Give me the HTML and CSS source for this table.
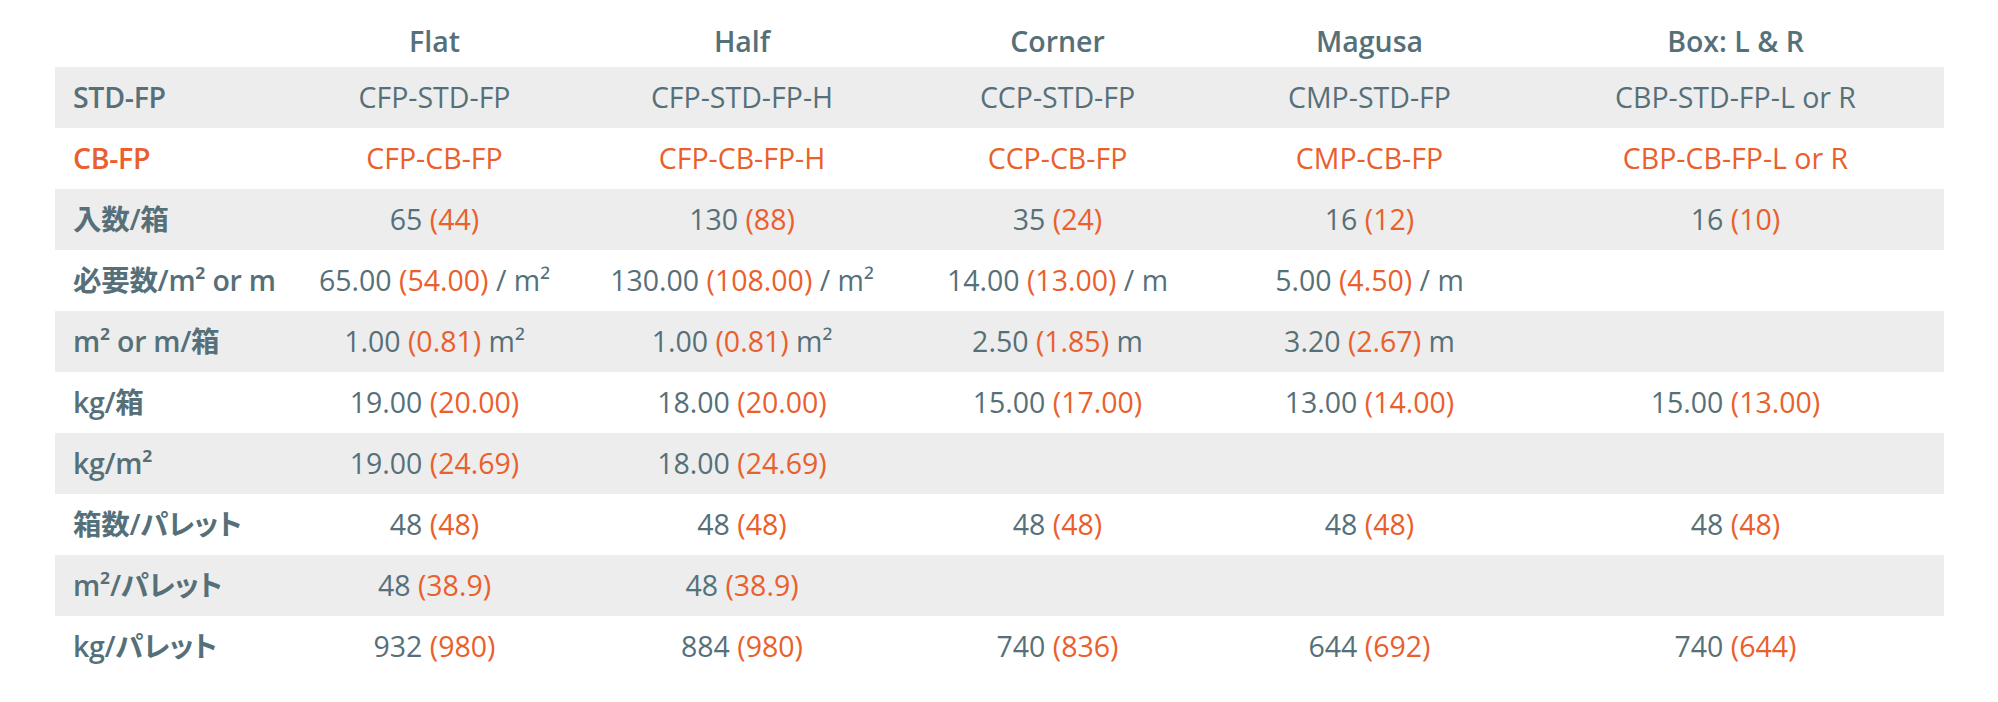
FILE: index.html
```html
<!DOCTYPE html>
<html lang="ja">
<head>
<meta charset="utf-8">
<title>Spec table</title>
<link rel="stylesheet" href="styles.css">
</head>
<body>
<div class="wrap">
<table class="spec">
  <colgroup>
    <col class="c-label">
    <col class="c-flat">
    <col class="c-half">
    <col class="c-corner">
    <col class="c-magusa">
    <col class="c-box">
  </colgroup>
  <thead>
    <tr>
      <th></th>
      <th class="head">Flat</th>
      <th class="head">Half</th>
      <th class="head">Corner</th>
      <th class="head">Magusa</th>
      <th class="head">Box: L &amp; R</th>
    </tr>
  </thead>
  <tbody>
    <tr class="band">
      <th class="label">STD-FP</th>
      <td>CFP-STD-FP</td>
      <td>CFP-STD-FP-H</td>
      <td>CCP-STD-FP</td>
      <td>CMP-STD-FP</td>
      <td>CBP-STD-FP-L or R</td>
    </tr>
    <tr class="cb">
      <th class="label">CB-FP</th>
      <td>CFP-CB-FP</td>
      <td>CFP-CB-FP-H</td>
      <td>CCP-CB-FP</td>
      <td>CMP-CB-FP</td>
      <td>CBP-CB-FP-L or R</td>
    </tr>
    <tr class="band">
      <th class="label">入数/箱</th>
      <td>65 <span class="alt">(44)</span></td>
      <td>130 <span class="alt">(88)</span></td>
      <td>35 <span class="alt">(24)</span></td>
      <td>16 <span class="alt">(12)</span></td>
      <td>16 <span class="alt">(10)</span></td>
    </tr>
    <tr>
      <th class="label">必要数/m² or m</th>
      <td>65.00 <span class="alt">(54.00)</span> / m²</td>
      <td>130.00 <span class="alt">(108.00)</span> / m²</td>
      <td>14.00 <span class="alt">(13.00)</span> / m</td>
      <td>5.00 <span class="alt">(4.50)</span> / m</td>
      <td></td>
    </tr>
    <tr class="band">
      <th class="label">m² or m/箱</th>
      <td>1.00 <span class="alt">(0.81)</span> m²</td>
      <td>1.00 <span class="alt">(0.81)</span> m²</td>
      <td>2.50 <span class="alt">(1.85)</span> m</td>
      <td>3.20 <span class="alt">(2.67)</span> m</td>
      <td></td>
    </tr>
    <tr>
      <th class="label">kg/箱</th>
      <td>19.00 <span class="alt">(20.00)</span></td>
      <td>18.00 <span class="alt">(20.00)</span></td>
      <td>15.00 <span class="alt">(17.00)</span></td>
      <td>13.00 <span class="alt">(14.00)</span></td>
      <td>15.00 <span class="alt">(13.00)</span></td>
    </tr>
    <tr class="band">
      <th class="label">kg/m²</th>
      <td>19.00 <span class="alt">(24.69)</span></td>
      <td>18.00 <span class="alt">(24.69)</span></td>
      <td></td>
      <td></td>
      <td></td>
    </tr>
    <tr>
      <th class="label">箱数/パレット</th>
      <td>48 <span class="alt">(48)</span></td>
      <td>48 <span class="alt">(48)</span></td>
      <td>48 <span class="alt">(48)</span></td>
      <td>48 <span class="alt">(48)</span></td>
      <td>48 <span class="alt">(48)</span></td>
    </tr>
    <tr class="band">
      <th class="label">m²/パレット</th>
      <td>48 <span class="alt">(38.9)</span></td>
      <td>48 <span class="alt">(38.9)</span></td>
      <td></td>
      <td></td>
      <td></td>
    </tr>
    <tr>
      <th class="label">kg/パレット</th>
      <td>932 <span class="alt">(980)</span></td>
      <td>884 <span class="alt">(980)</span></td>
      <td>740 <span class="alt">(836)</span></td>
      <td>644 <span class="alt">(692)</span></td>
      <td>740 <span class="alt">(644)</span></td>
    </tr>
  </tbody>
</table>
</div>
</body>
</html>
```

FILE: styles.css
```css
html, body {
  margin: 0;
  padding: 0;
  background: #ffffff;
}

body {
  font-family: "Open Sans", "Noto Sans CJK JP", sans-serif;
  color: #56707a;
}

.wrap {
  padding: 0 54px 0 55px;
}

.spec {
  width: 100%;
  border-collapse: collapse;
  border-spacing: 0;
  table-layout: fixed;
  font-size: 28.5px;
  line-height: 40px;
  font-feature-settings: "palt";
}

.c-label { width: 233px; }
.c-flat { width: 293px; }
.c-half { width: 322px; }
.c-corner { width: 309px; }
.c-magusa { width: 315px; }
.c-box { width: 417px; }

.spec thead tr {
  height: 67px;
}

.spec thead th {
  padding: 0 0 6px 0;
  vertical-align: bottom;
  font-weight: 600;
  text-align: center;
  white-space: nowrap;
}

.spec tbody tr {
  height: 61px;
}

.spec tbody th,
.spec tbody td {
  padding: 0 0 2px 0;
  vertical-align: middle;
  white-space: nowrap;
}

.spec tbody td {
  text-align: center;
  font-weight: 400;
}

.spec .label {
  text-align: left;
  padding-left: 18px;
  font-weight: 600;
  letter-spacing: -0.3px;
}

.band {
  background: #ededed;
}

.cb,
.alt {
  color: #e9602c;
}
```
